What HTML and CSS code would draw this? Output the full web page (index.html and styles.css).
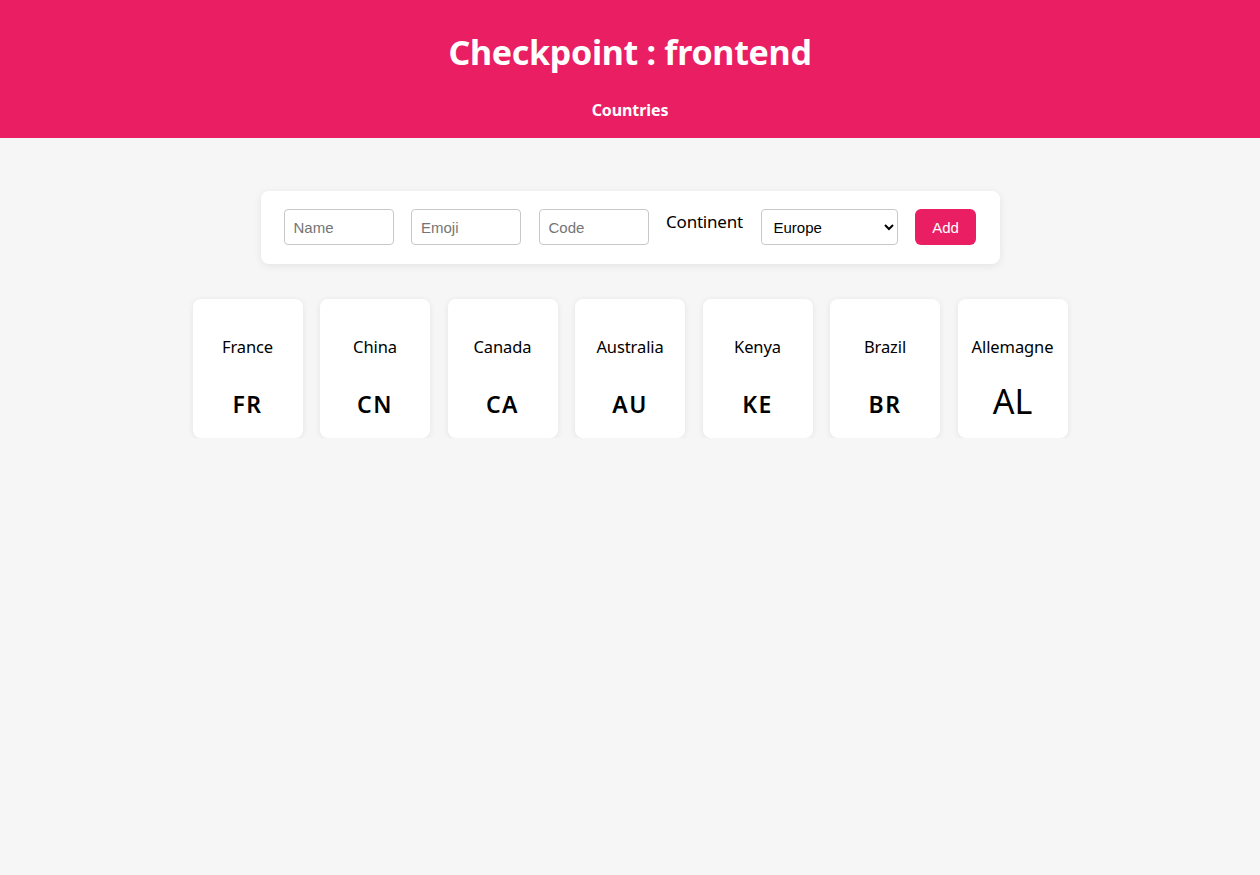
FILE: index.html
```html
<!DOCTYPE html>
<html lang="en">
<head>
<meta charset="utf-8">
<title>Checkpoint : frontend</title>
<link rel="stylesheet" href="styles.css">
</head>
<body>
<header class="header">
  <h1 class="title">Checkpoint : frontend</h1>
  <nav class="nav"><a class="nav-link" href="#">Countries</a></nav>
</header>
<main class="main">
  <form class="add-form">
    <input class="field" type="text" placeholder="Name">
    <input class="field" type="text" placeholder="Emoji">
    <input class="field" type="text" placeholder="Code">
    <label class="label">Continent</label>
    <select class="select">
      <option>Europe</option>
    </select>
    <button class="btn" type="button">Add</button>
  </form>
  <section class="cards">
    <div class="card"><p class="card-name">France</p><p class="card-flag">FR</p></div>
    <div class="card"><p class="card-name">China</p><p class="card-flag">CN</p></div>
    <div class="card"><p class="card-name">Canada</p><p class="card-flag">CA</p></div>
    <div class="card"><p class="card-name">Australia</p><p class="card-flag">AU</p></div>
    <div class="card"><p class="card-name">Kenya</p><p class="card-flag">KE</p></div>
    <div class="card"><p class="card-name">Brazil</p><p class="card-flag">BR</p></div>
    <div class="card"><p class="card-name">Allemagne</p><p class="card-flag card-flag-plain">AL</p></div>
  </section>
</main>
</body>
</html>
```
FILE: styles.css
```css
* { box-sizing: border-box; }
html, body { margin: 0; padding: 0; }
body {
  background: #f6f6f6;
  font-family: "Noto Sans", "Open Sans", sans-serif;
  color: #000;
}
.header {
  background: #e91e63;
  color: #fff;
  height: 138px;
  display: flex;
  flex-direction: column;
  align-items: center;
  padding-top: 29px;
}
.title {
  margin: 0;
  font-size: 34px;
  line-height: 46px;
  font-weight: 700;
  letter-spacing: -0.3px;
}
.nav { margin-top: 24px; }
.nav-link {
  color: #fff;
  text-decoration: none;
  font-weight: 700;
  font-size: 16px;
  line-height: 22px;
  letter-spacing: -0.1px;
}
.main {
  display: flex;
  flex-direction: column;
  align-items: center;
  padding-top: 53px;
}
.add-form {
  width: 739px;
  height: 73px;
  background: #fff;
  border-radius: 8px;
  box-shadow: 0 2px 8px rgba(0,0,0,0.08);
  display: flex;
  align-items: flex-start;
  padding: 18px 23px;
  gap: 17.5px;
}
.field {
  width: 110px;
  height: 36px;
  border: 1px solid #c8c8c8;
  border-radius: 4px;
  padding: 1px 9px 0;
  font-family: "Liberation Sans", Arial, sans-serif;
  font-size: 15px;
  color: #333;
  outline: none;
}
.field::placeholder { color: #757575; }
.label {
  font-size: 17px;
  line-height: 24px;
  width: 77px;
  padding-top: 1px;
  white-space: nowrap;
  letter-spacing: -0.2px;
}
.select {
  width: 137px;
  height: 36px;
  border: 1px solid #c8c8c8;
  border-radius: 4px;
  background: #fff;
  font-family: "Liberation Sans", Arial, sans-serif;
  font-size: 15px;
  padding: 1px 8px 0;
  color: #000;
}
.btn {
  width: 61px;
  height: 36px;
  border: none;
  border-radius: 6px;
  background: #e91e63;
  color: #fff;
  font-family: "Liberation Sans", Arial, sans-serif;
  font-size: 15px;
  padding-top: 1px;
}
.cards {
  display: flex;
  gap: 17.5px;
  margin-top: 35px;
}
.card {
  width: 110px;
  height: 139px;
  background: #fff;
  border-radius: 8px;
  box-shadow: 0 1px 6px rgba(0,0,0,0.08);
  display: flex;
  flex-direction: column;
  align-items: center;
  padding-top: 37px;
}
.card-name {
  margin: 0;
  font-size: 16.5px;
  line-height: 22px;
  letter-spacing: -0.1px;
}
.card-flag {
  margin: 32px 0 0;
  font-size: 23px;
  line-height: 28px;
  font-weight: 600;
  letter-spacing: 1.5px;
}
.card-flag-plain {
  margin-top: 23px;
  font-size: 34px;
  line-height: 40px;
  font-weight: 400;
  letter-spacing: 0;
}
```
